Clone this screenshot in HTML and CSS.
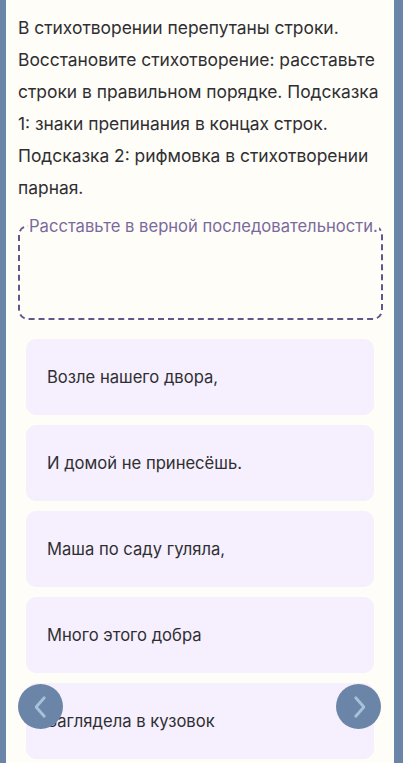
FILE: index.html
```html
<!DOCTYPE html>
<html lang="ru">
<head>
<meta charset="utf-8">
<link rel="stylesheet" href="styles.css">
</head>
<body>
<div class="frame">
  <p class="task">В стихотворении перепутаны строки. Восстановите стихотворение: расставьте строки в правильном порядке. Подсказка 1: знаки препинания в концах строк. Подсказка 2: рифмовка в стихотворении парная.</p>
  <fieldset class="drop">
    <legend class="drop-label">Расставьте в верной последовательности.</legend>
  </fieldset>
  <div class="cards">
    <div class="card">Возле нашего двора,</div>
    <div class="card">И домой не принесёшь.</div>
    <div class="card">Маша по саду гуляла,</div>
    <div class="card">Много этого добра</div>
    <div class="card">Заглядела в кузовок</div>
  </div>
</div>
<button class="nav nav-prev" aria-label="Назад">
  <svg viewBox="0 0 24 24" width="26" height="26"><path d="M15 3.5 L7.5 12 L15 20.5" fill="none" stroke="#a9c0da" stroke-width="2.6" stroke-linecap="round" stroke-linejoin="round"/></svg>
</button>
<button class="nav nav-next" aria-label="Вперёд">
  <svg viewBox="0 0 24 24" width="26" height="26"><path d="M9 3.5 L16.5 12 L9 20.5" fill="none" stroke="#a9c0da" stroke-width="2.6" stroke-linecap="round" stroke-linejoin="round"/></svg>
</button>
</body>
</html>
```
FILE: styles.css
```css
html, body {
  margin: 0;
  padding: 0;
  height: 100%;
  overflow: hidden;
}
body {
  background: #6b85a8;
  font-family: Inter, "Noto Sans", sans-serif;
}
.frame {
  margin: 0 9px 0 6px;
  min-height: 100%;
  background: #fffdf8;
  padding: 12px 11px 0 12px;
  box-sizing: border-box;
}
.task {
  margin: 0;
  font-size: 17.4px;
  line-height: 32px;
  color: #2f2f33;
}
.drop {
  margin: 12px 0 0 0;
  padding: 0;
  height: 100px;
  border: 2px dashed #64558a;
  border-radius: 10px;
  min-width: 0;
}
.drop-label {
  margin-left: 8px;
  padding: 0 1px;
  font-size: 16.6px;
  line-height: 20px;
  white-space: nowrap;
  color: #7a6a9c;
}
.cards {
  display: flex;
  flex-direction: column;
  gap: 10px;
  margin: 19px 9px 0 8px;
}
.card {
  height: 76px;
  box-sizing: border-box;
  display: flex;
  align-items: center;
  padding-left: 21px;
  background: #f6effd;
  border-radius: 10px;
  font-size: 16.6px;
  color: #2f2f33;
}
.nav {
  position: fixed;
  top: 684px;
  width: 45px;
  height: 45px;
  border: none;
  border-radius: 50%;
  background: #6b85a8;
  display: flex;
  align-items: center;
  justify-content: center;
  padding: 0;
}
.nav-prev { left: 18px; }
.nav-next { left: 336px; }
```
